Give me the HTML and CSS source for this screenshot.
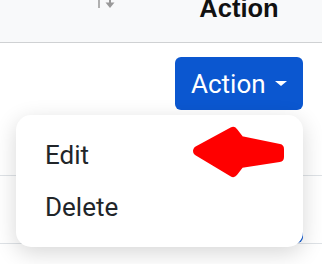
FILE: index.html
```html
<!DOCTYPE html>
<html>
<head>
<meta charset="utf-8">
<link rel="stylesheet" href="styles.css">
</head>
<body>
<div class="table">
  <div class="thead">
    <div class="cell first">
      <svg class="sort" width="22" height="10" viewBox="0 0 22 10">
        <line x1="3" y1="-6" x2="3" y2="8" stroke="#b0b0b0" stroke-width="2"/>
        <line x1="14" y1="-6" x2="14" y2="4" stroke="#999" stroke-width="2"/>
        <path d="M9.5 2.5 L18.5 2.5 L14 8 Z" fill="#999"/>
      </svg>
    </div>
    <div class="cell action-col"><span class="th-text">Action</span></div>
  </div>
  <div class="row row-one">
    <div class="cell first"></div>
    <div class="cell action-col">
      <button class="btn">Action<span class="caret"></span></button>
    </div>
  </div>
  <div class="row">
    <div class="cell first"></div>
    <div class="cell action-col">
      <button class="btn">Action<span class="caret"></span></button>
    </div>
  </div>
</div>

<div class="menu">
  <div class="item">Edit</div>
  <div class="item">Delete</div>
</div>

<svg class="pointer" width="322" height="264" viewBox="0 0 322 264">
  <polygon points="198,151 233,132 240,141 279,149 279,157 240,163 233,172" fill="#ff0000" stroke="#ff0000" stroke-width="10" stroke-linejoin="round"/>
</svg>
</body>
</html>
```
FILE: styles.css
```css
html, body {
  margin: 0;
  padding: 0;
  background: #ffffff;
  overflow: hidden;
}
body {
  width: 322px;
  height: 264px;
  position: relative;
  font-family: Roboto, "Liberation Sans", sans-serif;
}
.table {
  display: flex;
  flex-direction: column;
  width: 322px;
}
.thead {
  display: flex;
  height: 42px;
  background: #f8f9fa;
  border-bottom: 1px solid #cfd1d3;
}
.cell.first {
  width: 160px;
}
.cell.action-col {
  width: 158px;
  display: flex;
  justify-content: center;
}
.sort {
  display: block;
  margin-left: 96px;
  margin-top: 0;
}
.th-text {
  font-family: "Liberation Sans", Arial, sans-serif;
  font-weight: bold;
  font-size: 25.5px;
  line-height: 26px;
  margin-top: -5px;
  color: #111;
}
.row {
  display: flex;
  border-bottom: 1px solid #dee2e6;
}
.row-one {
  height: 132px;
}
.btn {
  margin-top: 14px;
  width: 128px;
  height: 53px;
  box-sizing: border-box;
  border: none;
  border-radius: 6px;
  background: #0b57d0;
  color: #fff;
  font-family: Roboto, sans-serif;
  font-size: 26px;
  padding: 0 15px 0 16px;
  display: flex;
  align-items: center;
  justify-content: flex-start;
}
.caret {
  margin-left: 9px;
  width: 0;
  height: 0;
  border-left: 6.5px solid transparent;
  border-right: 6.5px solid transparent;
  border-top: 5.5px solid #fff;
}
.menu {
  position: absolute;
  left: 16px;
  top: 115px;
  width: 287px;
  height: 132px;
  box-sizing: border-box;
  padding: 14px 0 0;
  background: #fff;
  border-radius: 15px;
  box-shadow: 0 6px 22px rgba(0, 0, 0, 0.16);
}
.item {
  height: 52px;
  line-height: 52px;
  padding-left: 29px;
  font-size: 26px;
  color: #212529;
}
.pointer {
  position: absolute;
  left: 0;
  top: 0;
}
```
